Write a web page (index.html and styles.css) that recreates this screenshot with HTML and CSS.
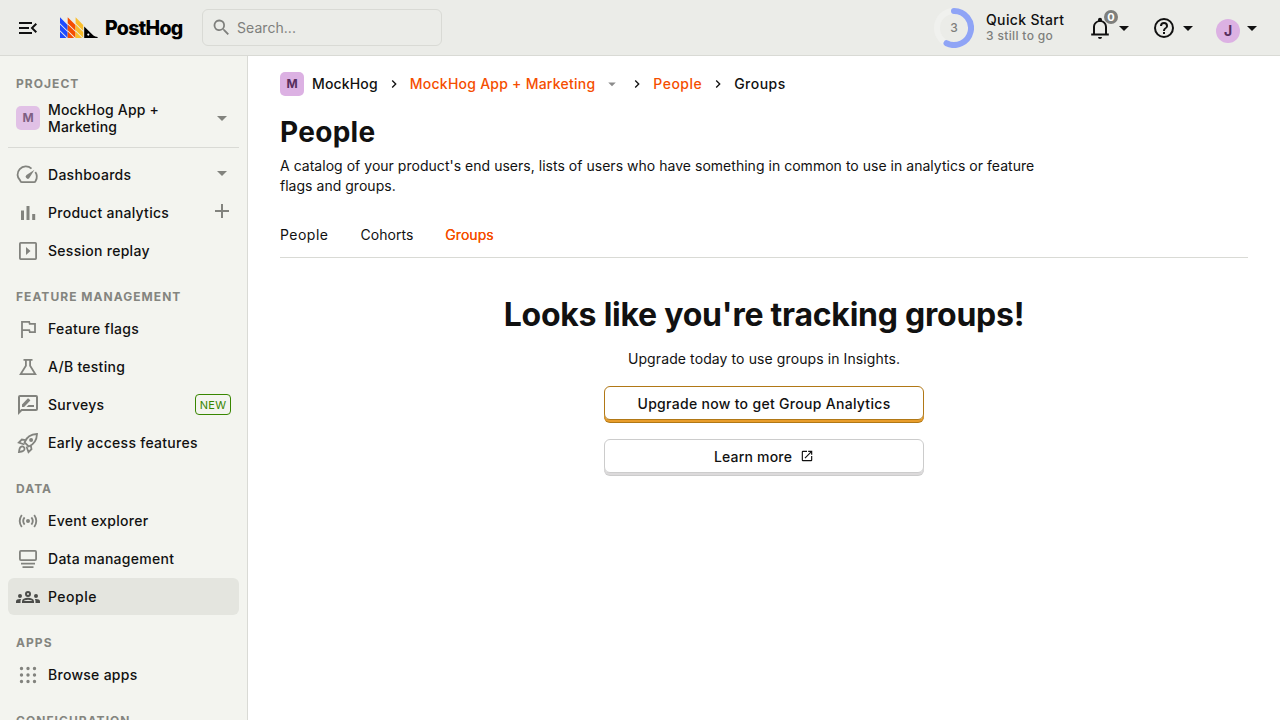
FILE: index.html
```html
<!DOCTYPE html>
<html lang="en">
<head>
<meta charset="utf-8">
<title>People • PostHog</title>
<link rel="stylesheet" href="styles.css">
</head>
<body>
<svg width="0" height="0" class="defs">
  <symbol id="caret" viewBox="0 0 24 24"><path d="M7 10l5 5 5-5z"/></symbol>
  <symbol id="chevron" viewBox="0 0 24 24"><path d="M8.6 16.6 13.2 12 8.6 7.4 10 6l6 6-6 6z"/></symbol>
</svg>
<header class="topbar">
  <svg class="menu icon" viewBox="0 0 24 24"><path d="M3 18h13v-2H3v2zM3 13h10v-2H3v2zm0-7v2h13V6H3zm18 9.600L17.400 12 21 8.400 19.600 7l-5 5 5 5 1.400-1.400z"/></svg>
  <div class="logo">
    <svg width="38" height="22" viewBox="0 0 38 22">
      <path fill="#1d4aff" d="M0 0.300l7.600 7.600v5.900L0 6.200zM0 7.400l7.600 7.600v5.800L0 13.200zM0 14.500l6.500 6.500H0z"/>
      <path fill="#f54e00" d="M7.700 0.300l7.800 7.600v5.900L7.700 6.200zM7.700 7.400l7.800 7.600v5.800L7.700 13.200zM7.700 14.500l6.500 6.500H7.700z"/>
      <path fill="#f9bd2b" d="M15.600 0.300l7.600 7.600v5.900l-7.600-7.600zM15.600 7.400l7.600 7.600v5.800l-7.600-7.600zM15.600 14.500l6.500 6.500h-6.500z"/>
      <path fill="#000" d="M24.200 9.500l9.200 9q1.600 1.300 4.200 1.500V21H24.200z"/>
      <circle cx="28.300" cy="17.600" r="1.100" fill="#fff"/>
    </svg>
    <span class="wordmark">PostHog</span>
  </div>
  <div class="search">
    <svg class="icon" viewBox="0 0 24 24"><path d="M15.500 14h-.8l-.3-.3A6.500 6.500 0 1 0 13.700 14.400l.3.300v.8l5 5 1.500-1.500-5-5zm-6 0a4.500 4.500 0 1 1 0-9 4.500 4.500 0 0 1 0 9z"/></svg>
    <span>Search...</span>
  </div>
  <div class="quick">
    <div class="ring">
      <svg width="40" height="40" viewBox="0 0 40 40">
        <circle class="track" cx="20" cy="20" r="17"/>
        <path class="progress" d="M20 3a17 17 0 1 1-7.500 32.250"/>
      </svg>
      <span>3</span>
    </div>
    <div class="quick-text"><b>Quick Start</b><span>3 still to go</span></div>
  </div>
  <div class="tool bell">
    <svg class="icon" viewBox="0 0 24 24"><path d="M12 23a2 2 0 0 0 2-2h-4a2 2 0 0 0 2 2zM19 17.500V11c0-3.100-1.900-5.900-5-6.600V3.800a2 2 0 0 0-4 0v.6C6.900 5.100 5 7.900 5 11v6.500H3.200v2h17.600v-2zM17 17.500H7V11c0-2.800 2-4.900 5-4.900s5 2.100 5 4.900z"/></svg>
    <svg class="icon" viewBox="0 0 24 24"><use href="#caret"/></svg>
    <span class="count">0</span>
  </div>
  <div class="tool help">
    <svg class="icon" viewBox="0 0 24 24"><path d="M11 18h2v-2h-2v2zm1-16a10 10 0 1 0 0 20 10 10 0 0 0 0-20zm0 18a8 8 0 1 1 0-16 8 8 0 0 1 0 16zm0-14a4 4 0 0 0-4 4h2a2 2 0 1 1 4 0c0 2-3 1.750-3 5h2c0-2.250 3-2.500 3-5a4 4 0 0 0-4-4z"/></svg>
    <svg class="icon" viewBox="0 0 24 24"><use href="#caret"/></svg>
  </div>
  <div class="tool user">
    <span class="avatar">J</span>
    <svg class="icon" viewBox="0 0 24 24"><use href="#caret"/></svg>
  </div>
</header>
<div class="layout">
  <nav class="sidebar">
    <h5 class="first">Project</h5>
    <div class="item project"><span class="lettermark">M</span><span class="label">MockHog App + Marketing</span><svg class="icon" viewBox="0 0 24 24"><use href="#caret"/></svg></div>
    <hr>
    <div class="item"><svg class="icon" viewBox="0 0 24 24"><path class="line" d="M15.500 5.600A8 7.800 0 0 0 4.200 17.500q.3 1.600 1.600 1.600h12.400q1.300 0 1.600-1.600A8.300 8.300 0 0 0 19.300 9"/><path d="M18.500 6.800l-8 5.300a2 2 0 1 0 2.800 2.800z"/></svg><span class="label">Dashboards</span><svg class="icon raised" viewBox="0 0 24 24"><use href="#caret"/></svg></div>
    <div class="item"><svg class="icon" viewBox="0 0 24 24"><path d="M5 9.500h3V19H5zM10.500 5h3v14h-3zM16.200 13h3v6h-3z"/></svg><span class="label">Product analytics</span><svg class="icon raised" viewBox="0 0 24 24"><path d="M19 13h-6v6h-2v-6H5v-2h6V5h2v6h6z"/></svg></div>
    <div class="item"><svg class="icon" viewBox="0 0 24 24"><rect class="line" x="3.900" y="3.900" width="16.200" height="16.200" rx=".8"/><path d="M10 8v8l4.500-4z"/></svg><span class="label">Session replay</span></div>

    <h5>Feature management</h5>
    <div class="item"><svg class="icon" viewBox="0 0 24 24"><path class="line" d="M6 21V4.900h7.200l.5 2H19v8.200h-5.200l-.5-2H6"/></svg><span class="label">Feature flags</span></div>
    <div class="item"><svg class="icon" viewBox="0 0 24 24"><path class="line" d="M7.500 4.900h9M9.900 5v5.800L4.700 19.100h14.600l-5.200-8.300V5"/></svg><span class="label">A/B testing</span></div>
    <div class="item"><svg class="icon" viewBox="0 0 24 24"><path d="M20 2H4a2 2 0 0 0-2 2v18l4-4h14a2 2 0 0 0 2-2V4a2 2 0 0 0-2-2zm0 14H5.200L4 17.200V4h16v12zm-9.500-2H18v-2h-5.500zM14.100 7.800a.5.500 0 0 0 0-.7l-1.700-1.700a.5.500 0 0 0-.7 0L6 11.500V14h2.100z"/></svg><span class="label">Surveys</span><span class="tag">NEW</span></div>
    <div class="item"><svg class="icon" viewBox="0 0 24 24"><path class="line" d="M8.500 11.300c2-5 5.500-8 12.500-8.300-.3 7-3.300 10.500-8.300 12.500zM9.500 9.200l-3.700-.700-3 3 5.700 2M14.800 14.500l.7 3.700-3 3-2-5.700M7.800 16.200c-1.500-1.500-3.500-.5-4 1-.6 1.500-.6 2.600-.8 3.800 1.200-.2 2.300-.2 3.800-.8 1.500-.5 2.500-2.500 1-4z"/><circle cx="15.100" cy="8.900" r="2"/></svg><span class="label">Early access features</span></div>

    <h5>Data</h5>
    <div class="item"><svg class="icon" viewBox="0 0 24 24"><circle cx="12" cy="12" r="2"/><path class="line" d="M8.600 8.400q-2.800 3.600 0 7.200M15.400 8.400q2.800 3.600 0 7.200M5.800 6q-4.200 6 0 12M18.200 6q4.200 6 0 12"/></svg><span class="label">Event explorer</span></div>
    <div class="item"><svg class="icon" viewBox="0 0 24 24"><rect class="line" x="3.900" y="3.900" width="16.200" height="9.200" rx="1"/><path d="M5 15.800h14v1.700H5zM6.500 19.300h11V21h-11z"/></svg><span class="label">Data management</span></div>
    <div class="item active wide"><svg class="icon" viewBox="0 0 24 24"><path d="M4 13a2 2 0 1 0 0-4 2 2 0 0 0 0 4zm1.130 1.100A7 7 0 0 0 4 14c-.99 0-1.930.210-2.780.580A2 2 0 0 0 0 16.430V18h4.500v-1.610c0-.83.230-1.610.630-2.290zM20 13a2 2 0 1 0 0-4 2 2 0 0 0 0 4zm4 3.430a2 2 0 0 0-1.220-1.850A7 7 0 0 0 18.870 14.100c.4.680.63 1.460.63 2.290V18H24zM16.240 13.650A10.500 10.500 0 0 0 12 12.750c-1.630 0-3.070.390-4.240.9A3 3 0 0 0 6 16.390V18h12v-1.610a3 3 0 0 0-1.760-2.740zM8.070 16c.09-.23.130-.39.910-.69a8.500 8.500 0 0 1 6.040 0c.77.3.81.46.910.69zM12 8a1 1 0 1 1 0 2 1 1 0 0 1 0-2m0-2a3 3 0 1 0 0 6 3 3 0 0 0 0-6z"/></svg><span class="label">People</span></div>

    <h5>Apps</h5>
    <div class="item"><svg class="icon" viewBox="0 0 24 24"><path class="dots" d="M5.500 5.500h0M12 5.500h0M18.500 5.500h0M5.500 12h0M12 12h0M18.500 12h0M5.500 18.500h0M12 18.500h0M18.500 18.500h0"/></svg><span class="label">Browse apps</span></div>
    <h5>Configuration</h5>
  </nav>
  <main>
    <div class="crumbs">
      <span class="lettermark">M</span><span class="org">MockHog</span>
      <svg class="sep" viewBox="0 0 24 24"><use href="#chevron"/></svg>
      <a>MockHog App + Marketing</a><svg class="drop" viewBox="0 0 24 24"><use href="#caret"/></svg>
      <svg class="sep" viewBox="0 0 24 24"><use href="#chevron"/></svg>
      <a class="wide">People</a>
      <svg class="sep" viewBox="0 0 24 24"><use href="#chevron"/></svg>
      <span class="wide">Groups</span>
    </div>
    <h1>People</h1>
    <p class="caption">A catalog of your product's end users, lists of users who have something in common to use in analytics or feature flags and groups.</p>
    <div class="tabs"><span class="wide">People</span><span>Cohorts</span><span class="selected">Groups</span></div>
    <section class="intro">
      <h2>Looks like you're tracking groups!</h2>
      <p>Upgrade today to use groups in Insights.</p>
      <div class="button primary"><span>Upgrade now to get Group Analytics</span></div>
      <div class="button"><span>Learn more</span><svg viewBox="0 0 24 24"><path d="M19 19H5V5h7V3H5a2 2 0 0 0-2 2v14a2 2 0 0 0 2 2h14a2 2 0 0 0 2-2v-7h-2v7zM14 3v2h3.600l-9.800 9.800 1.400 1.400L19 6.400V10h2V3z"/></svg></div>
    </section>
  </main>
</div>
</body>
</html>
```
FILE: styles.css
```css
* { box-sizing: border-box; }
body { margin: 0; height: 720px; overflow: hidden; font: 14px/20px Inter, sans-serif; color: #111; background: #fff; }
h1, h2, h5, p { margin: 0; }
svg { fill: currentColor; flex: none; display: block; }
.defs { position: absolute; }
.icon { width: 24px; height: 24px; }
.line { fill: none; stroke: currentColor; stroke-width: 1.8; }
.dots { stroke: currentColor; stroke-width: 3.4; stroke-linecap: round; }

.topbar { height: 56px; display: flex; align-items: center; padding: 0 16px; background: #ebece8; border-bottom: 1px solid #d9dad5; }
.logo { display: flex; align-items: center; margin-left: 20px; width: 142px; }
.wordmark { margin: 0 0 0 7px; font-size: 19.5px; font-weight: 800; letter-spacing: -0.7px; line-height: 22px; color: #000; }
.search { width: 240px; height: 37px; border: 1px solid #d9dad5; border-radius: 6px; display: flex; align-items: center; padding-left: 8px; gap: 5px; letter-spacing: .05px; color: #7e7f7c; }
.search .icon { width: 21px; height: 21px; }
.quick { display: flex; align-items: center; margin-left: auto; gap: 12px; width: 154px; }
.ring { display: grid; place-items: center; font-size: 12px; font-weight: 500; color: #7e7f7c; }
.ring > * { grid-area: 1 / 1; }
.track, .progress { fill: none; stroke-width: 6; }
.track { stroke: #f0f1ee; }
.progress { stroke: #8fa4f6; stroke-linecap: round; }
.quick-text { display: flex; flex-direction: column; white-space: nowrap; font-weight: 500; letter-spacing: .35px; margin-bottom: 2px; }
.quick-text b { font-weight: 500; line-height: 17px; }
.quick-text span { font-size: 12px; line-height: 15px; color: #7e7f7c; }
.tool { display: flex; position: relative; width: 48px; }
.help, .user { margin-left: 16px; }
.count { position: absolute; left: 16px; top: -6px; width: 14px; height: 14px; border-radius: 50%; background: #7e7f7c; color: #fff; font-size: 11px; font-weight: 700; line-height: 14px; text-align: center; }
.avatar, .lettermark { width: 24px; height: 24px; flex: none; background: #dcb1e3; color: #572e5e; font-weight: 700; line-height: 24px; text-align: center; letter-spacing: 0; }
.avatar { border-radius: 50%; margin: 3px 0 -3px; font-size: 14px; }
.lettermark { border-radius: 5px; font-size: 12px; }

.layout { display: flex; height: 664px; }
.sidebar { width: 248px; flex: none; padding: 16px 8px 0; background: #f3f4ef; border-right: 1px solid #d9dad5; overflow: hidden; }
.sidebar h5 { height: 24px; margin: 16px 0 1px; padding-left: 8px; font-size: 12px; line-height: 24px; font-weight: 700; letter-spacing: 1.04px; text-transform: uppercase; color: #84857f; }
.sidebar h5.first { margin: 0 0 2px; }
.item { height: 37px; margin-bottom: 1px; padding: 0 8px; display: flex; align-items: center; gap: 8px; border-radius: 6px; font-weight: 500; letter-spacing: .28px; }
.item .label { flex: 1; }
.item .icon { color: #82837e; }
.item .icon:last-child { margin-right: -3px; }
.item .raised { margin-bottom: 3px; }
.item .tag { width: 36px; height: 21px; border: 1px solid #388600; border-radius: 4px; font-size: 11px; font-weight: 400; line-height: 20px; text-align: center; color: #388600; }
.item.active { background: #e4e5df; }
.item.active .icon { color: #4b4c49; }
.item.project { height: 40px; margin: 0; line-height: 17px; letter-spacing: .18px; }
.project .lettermark { opacity: .75; }
.sidebar hr { height: 1px; border: 0; margin: 9px 0 8px; background: #d9dad5; }
.item + h5 { margin-top: 16px; }

main { flex: 1; padding: 16px 32px 0; }
.crumbs { display: flex; align-items: center; height: 24px; font-weight: 500; letter-spacing: .24px; }
.org { margin-left: 8px; letter-spacing: .16px; }
.crumbs a { color: #f54e00; }
.sep { width: 16px; height: 16px; margin: 0 8px; }
.drop { width: 18px; height: 18px; margin-left: 8px; color: #8b8b8b; }
.wide { letter-spacing: .48px !important; }
h1 { margin-top: 18px; font-size: 28px; line-height: 36px; font-weight: 700; letter-spacing: .3px; }
.caption { width: 768px; margin-top: 6px; letter-spacing: .026px; }
.tabs { display: flex; gap: 32px; height: 46px; margin-top: 16px; padding-top: 13px; letter-spacing: .04px; border-bottom: 1px solid #d9dad5; }
.selected { color: #f54e00; text-shadow: 0 0 .3px #f54e00; }
.intro { display: flex; flex-direction: column; align-items: center; padding-top: 37px; }
.intro h2 { font-size: 32px; line-height: 40px; font-weight: 700; letter-spacing: -.24px; }
.intro p { margin: 14px 0 17px; letter-spacing: .1px; }
.button { width: 320px; height: 34px; display: flex; align-items: center; justify-content: center; gap: 8px; border: 1px solid #ccc; border-radius: 6px; box-shadow: 0 2px #dcdadb, 0 3px #ccc; font-weight: 500; letter-spacing: .2px; }
.button span { padding-top: 2px; }
.button.primary { margin-bottom: 19px; border-color: #b17816; box-shadow: 0 2px #e89d2b, 0 3px #b17816; letter-spacing: .3px; }
.button svg { width: 14px; height: 14px; }
```
